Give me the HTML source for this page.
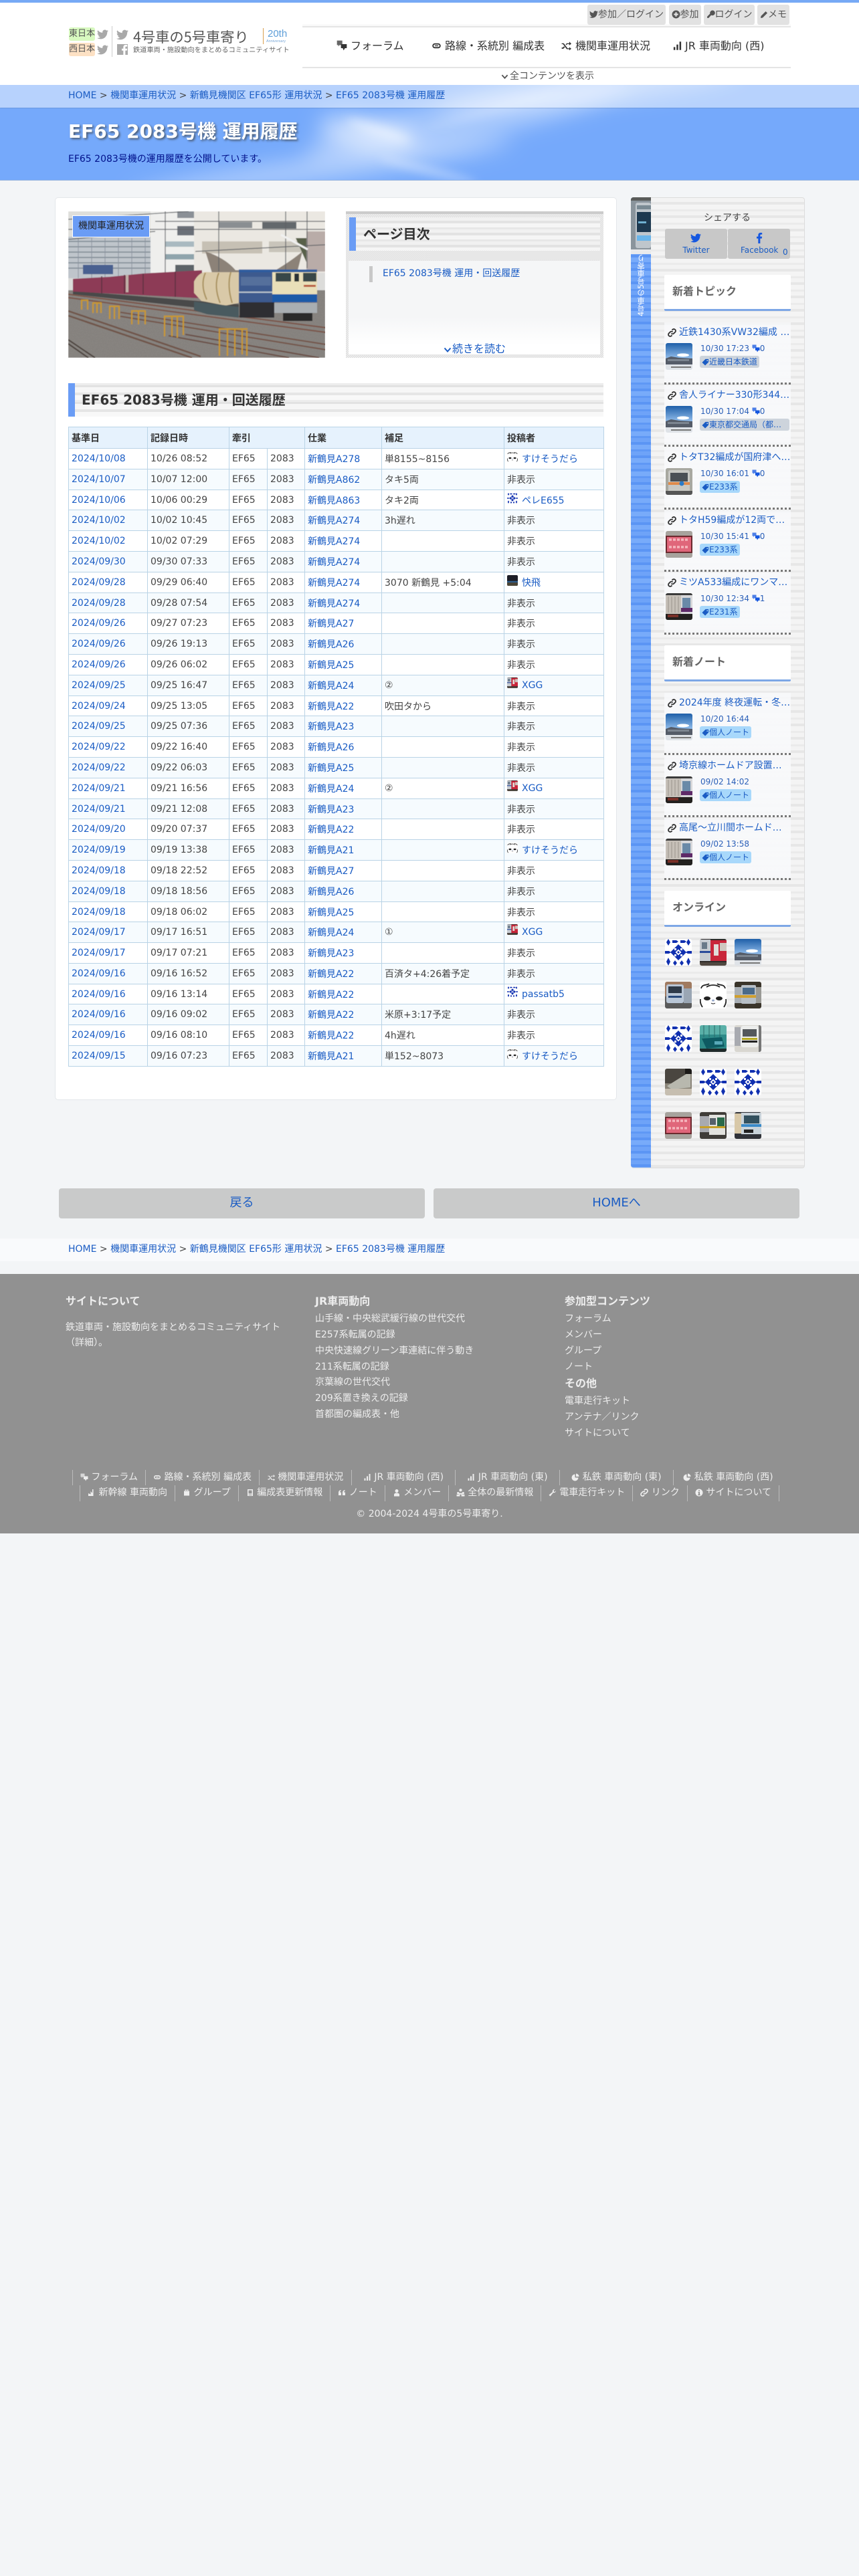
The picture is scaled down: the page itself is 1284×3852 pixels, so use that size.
<!DOCTYPE html>
<html lang="ja">
<head>
<meta charset="utf-8">
<title>EF65 2083号機 運用履歴</title>
<style>
html,body{margin:0;padding:0;background:#f3f5f7}
body{position:relative;width:1284px;height:3852px;overflow:hidden;font-family:"DejaVu Sans","Noto Sans CJK JP",sans-serif;font-size:14px;color:#444}
a{color:#1a5cc4;text-decoration:none}
.t{position:absolute;white-space:nowrap;line-height:20px}
.b{position:absolute}
svg{display:block}
.ic{display:inline-block;vertical-align:-2px;fill:currentColor}
.topb{position:absolute;top:7px;height:30px;background:#e2e2e2;border-radius:3px;color:#555;line-height:30px;text-align:center;white-space:nowrap;font-size:14px}
.nav{position:absolute;top:59px;line-height:20px;font-size:16px;color:#333;white-space:nowrap}
table{position:absolute;left:102px;top:638px;width:800px;table-layout:fixed;border-collapse:collapse;font-size:14px;color:#444}
td,th{border:1px solid #b9d3e6;padding:0 4px;text-align:left;white-space:nowrap;overflow:hidden}
th{background:#e6f2fd;color:#333;height:31px;padding:0 4px}
tr{height:31px}
tr.s{height:30px}
tr:nth-child(odd) td{background:#f6fbfe}
tr:nth-child(even) td{background:#fff}
.av{display:inline-block;width:16px;height:0;margin-right:6px;position:relative}
.av svg{position:absolute;left:0;top:-16px;width:16px;height:16px;border-radius:2px}
.it{position:absolute;left:993px;width:189px;height:91px;background:linear-gradient(rgba(248,249,251,.75),rgba(248,249,251,.95) 15%,rgba(248,249,251,.95) 90%,rgba(248,249,251,.7))}
.it .ti{position:absolute;left:22px;top:5px;width:167px;line-height:20px;font-size:14px;white-space:nowrap;overflow:hidden}
.it .lk{position:absolute;left:5px;top:9px;width:13px;height:13px;fill:none;stroke:#333;stroke-width:3}
.it .th{position:absolute;left:2px;top:31px;width:40px;height:40px;border-radius:3px;overflow:hidden}
.it .th svg,.ava svg{width:40px;height:40px;filter:blur(.35px)}
.it .da{position:absolute;left:54px;top:29px;line-height:20px;font-size:12px;color:#2a5fb8;white-space:nowrap}
.it .tg{position:absolute;left:53px;top:50px;height:18px;line-height:18px;font-size:12px;background:#a8d8fb;color:#1a5cc4;border-radius:3px;padding:0 3px 0 3px;white-space:nowrap;overflow:hidden}
.it .tg.g{background:#cdd4dc}
.se{position:absolute;left:993px;width:189px;height:0;border-top:3px dotted #777}
.hd{position:absolute;left:993px;width:189px;height:51px;background:#fff;border-bottom:3px solid #7da7e6;border-radius:2px;font-size:16px;font-weight:bold;color:#666;line-height:49px;text-indent:12px}
.ava{position:absolute;width:40px;height:40px;border-radius:3px;overflow:hidden}
.ft{position:absolute;white-space:nowrap;color:#eee;line-height:20px;font-size:14px}
.fh{font-weight:bold;font-size:16px}
.fn{position:absolute;height:23px;border-left:1px solid #bbb;color:#eee;text-align:center;line-height:23px;font-size:14px;white-space:nowrap;box-sizing:border-box}
</style>
</head>
<body>
<svg width="0" height="0" style="position:absolute">
<defs>
<symbol id="bird" viewBox="0 0 24 24"><path d="M23.95 4.57a10 10 0 0 1-2.83.78 4.96 4.96 0 0 0 2.17-2.72 9.9 9.9 0 0 1-3.13 1.19 4.92 4.92 0 0 0-8.39 4.48A13.98 13.98 0 0 1 1.64 3.16a4.92 4.92 0 0 0 1.52 6.57 4.9 4.9 0 0 1-2.23-.61v.06a4.92 4.92 0 0 0 3.95 4.83 4.9 4.9 0 0 1-2.21.08 4.93 4.93 0 0 0 4.6 3.42A9.87 9.87 0 0 1 0 19.54a13.94 13.94 0 0 0 7.55 2.21c9.05 0 14-7.5 14-13.98 0-.21 0-.42-.02-.63a10 10 0 0 0 2.46-2.57z"/></symbol>
<symbol id="fb" viewBox="0 0 24 24"><path d="M14 24V13h3.6l.6-4.3H14V6c0-1.2.4-2.1 2.2-2.1h2.1V.2C17.9.1 16.5 0 15 0c-3.3 0-5.5 2-5.5 5.6v3.1H6V13h3.5v11z"/></symbol>
<symbol id="com" viewBox="0 0 24 24"><path d="M1 1h12v10H7l-3 3v-3H1z" opacity=".75"/><path d="M10 9h13v9h-4l-3 5-2-5h-4z"/></symbol>
<symbol id="rt" viewBox="0 0 24 24"><path d="M8 6h8a6 6 0 0 1 0 12H8A6 6 0 0 1 8 6zm0 3a3 3 0 0 0 0 6h8a3 3 0 0 0 0-6z"/><path d="M8 11h8v2H8z"/></symbol>
<symbol id="shuf" viewBox="0 0 24 24"><path d="M1 6h5l9 12h4v-3l5 4-5 4v-3h-6L4 8H1zM1 16h3l2.500-3 2 2.500L5 19H1zM13 6h6V2l5 5-5 4V8h-5l-2 2.500-1.500-2z"/></symbol>
<symbol id="bars" viewBox="0 0 24 24"><path d="M3 15h4v7H3zM10 9h4v13h-4zM17 2h4v20h-4z"/></symbol>
<symbol id="pie" viewBox="0 0 24 24"><path d="M11 3v10h10a10 10 0 1 1-10-10zM14 1a9 9 0 0 1 9 9h-9z"/></symbol>
<symbol id="ar" viewBox="0 0 24 24"><path d="M2 22V14l7 3V8l5 5V2h3v20z"/></symbol>
<symbol id="gift" viewBox="0 0 24 24"><path d="M4 7h16v14H4zM7 3h4v3H7zM13 3h4v3h-4z"/></symbol>
<symbol id="book" viewBox="0 0 24 24"><path d="M4 2h16v20H4zm3 3v10h10V5zm0 13v2h10v-2z"/></symbol>
<symbol id="quo" viewBox="0 0 24 24"><path d="M2 20v-8c0-4 2-7 7-8v3c-2 1-3 2-3 4h4v9zM14 20v-8c0-4 2-7 7-8v3c-2 1-3 2-3 4h4v9z"/></symbol>
<symbol id="usr" viewBox="0 0 24 24"><circle cx="12" cy="7" r="5"/><path d="M4 23v-5c0-3 3-5 8-5s8 2 8 5v5z"/></symbol>
<symbol id="usrs" viewBox="0 0 24 24"><circle cx="12" cy="6" r="4"/><path d="M7 14h10v4H7z"/><circle cx="5" cy="14" r="3"/><circle cx="19" cy="14" r="3"/><path d="M1 18h9v5H1zM14 18h9v5h-9z"/></symbol>
<symbol id="wr" viewBox="0 0 24 24"><path d="M22 6a6 6 0 0 1-8 6L5 23l-4-4L12 10a6 6 0 0 1 7-8l-4 4 1 3 3 1z"/></symbol>
<symbol id="lnk" viewBox="0 0 24 24"><path fill="none" stroke="currentColor" stroke-width="3.500" d="M10 14a5 5 0 0 0 7 0l4-4a5 5 0 0 0-7-7l-2 2M14 10a5 5 0 0 0-7 0l-4 4a5 5 0 0 0 7 7l2-2"/></symbol>
<symbol id="info" viewBox="0 0 24 24"><path fill-rule="evenodd" d="M12 1a11 11 0 1 0 0 22 11 11 0 0 0 0-22zM10 5h4v3h-4zM9 10h5v8h2v2H8v-2h2v-6H9z"/></symbol>
<symbol id="key" viewBox="0 0 24 24"><path d="M16 1a7 7 0 1 1-3 13L6 22H2v-4l8-8a7 7 0 0 1 6-9z"/></symbol>
<symbol id="pen" viewBox="0 0 24 24"><path d="M17 2l5 5L8 21l-6 1 1-6z"/></symbol>
<symbol id="plus" viewBox="0 0 24 24"><path fill-rule="evenodd" d="M12 1a11 11 0 1 0 0 22 11 11 0 0 0 0-22zM10 6h4v4h4v4h-4v4h-4v-4H6v-4h4z"/></symbol>
<symbol id="chev" viewBox="0 0 24 24"><path fill="none" stroke="currentColor" stroke-width="4" d="M3 7l9 10 9-10"/></symbol>
<symbol id="tag" viewBox="0 0 24 24"><path fill-rule="evenodd" d="M1 13L12 2h10v10L11 23zM18 5a2 2 0 1 0 0 4 2 2 0 0 0 0-4z"/></symbol>

<symbol id="sky" viewBox="0 0 40 40"><defs><linearGradient id="g1" x1="0" y1="0" x2="0" y2="1"><stop offset="0" stop-color="#1f5fa8"/><stop offset=".55" stop-color="#8db9e8"/></linearGradient></defs><rect width="40" height="40" fill="url(#g1)"/><ellipse cx="26" cy="18" rx="9" ry="2.500" fill="#fff"/><path d="M0 23l8-3 12 2 20 1v9H0z" fill="#555c68"/><path d="M3 24h32v3H3z" fill="#7c8590"/><rect y="32" width="40" height="8" fill="#dfe3e8"/><rect x="8" y="35" width="30" height="2" fill="#777"/></symbol>
<symbol id="org" viewBox="0 0 40 40"><rect width="40" height="40" fill="#a8a8a0"/><rect x="4" y="3" width="32" height="34" rx="3" fill="#c8c8c4"/><rect x="7" y="7" width="26" height="13" fill="#4a4f55"/><rect x="4" y="21" width="32" height="4" fill="#e08a4a"/><circle cx="24" cy="23" r="3.500" fill="#2a7ac8"/><rect y="34" width="40" height="6" fill="#555"/></symbol>
<symbol id="led" viewBox="0 0 40 40"><rect width="40" height="40" fill="#a7a39d"/><rect y="7" width="40" height="26" fill="#6a2a2e"/><rect x="2" y="9" width="36" height="22" fill="#e0667a"/><path d="M5 13h30M5 24h30" stroke="#f5b5bd" stroke-width="3.500" stroke-dasharray="4 2"/></symbol>
<symbol id="met" viewBox="0 0 40 40"><rect width="40" height="40" fill="#3a3a3a"/><rect x="0" y="3" width="24" height="28" fill="#c6c0b8"/><path d="M4 5v24M9 5v24M14 5v24M19 5v24" stroke="#9b948c"/><rect x="23" y="3" width="17" height="28" fill="#d7d7d9"/><rect x="25" y="7" width="12" height="15" fill="#6a8aa8"/><rect x="23" y="22" width="17" height="6" fill="#5e2a68"/><rect y="31" width="40" height="9" fill="#23211f"/><rect x="3" y="32" width="16" height="4" fill="#7a3028"/></symbol>
<symbol id="idn" viewBox="0 0 40 40"><rect width="40" height="40" fill="#fff"/><g fill="#1030b0"><path d="M20 8l12 12-12 12L8 20z"/><path d="M5 0l3 5-3 5-3-5zM35 0l3 5-3 5-3-5zM5 28l3 6-3 6-3-6zM35 28l3 6-3 6-3-6zM11 2h6l3 2-3 2h-6zM23 2h6l3 2-3 2h-6zM0 18h6l3 2-3 2H0zM34 18h6v4h-6l-3-2zM15 32l3 4-3 4-3-4zM25 32l3 4-3 4-3-4z"/></g><path d="M14 14h3v3h-3zM23 14h3v3h-3zM14 23h3v3h-3zM23 23h3v3h-3z" fill="#fff"/><path d="M20 15.500l4.500 4.500-4.500 4.500-4.500-4.500z" fill="#fff"/><path d="M20 18l2 2-2 2-2-2z" fill="#1030b0"/></symbol>
<symbol id="red" viewBox="0 0 40 40"><rect width="40" height="40" fill="#2d2a28"/><rect x="0" y="1" width="16" height="32" fill="#c8ccd2"/><rect x="3" y="5" width="8" height="10" fill="#6a7a8a"/><rect x="16" y="2" width="24" height="31" fill="#c9263a"/><rect x="21" y="8" width="7" height="17" fill="#e0dcd8"/><rect x="30" y="6" width="10" height="12" fill="#cfc8c0"/><rect y="18" width="16" height="3" fill="#2a4a9a"/><rect y="35" width="40" height="5" fill="#504840"/></symbol>
<symbol id="tob" viewBox="0 0 40 40"><rect width="40" height="40" fill="#a07a60"/><rect y="22" width="40" height="18" fill="#5a5a5a"/><rect x="2" y="4" width="26" height="28" rx="3" fill="#b9c6d6"/><rect x="5" y="7" width="20" height="10" fill="#2f3a48"/><rect x="28" y="10" width="12" height="22" fill="#9aa6b4"/><rect x="5" y="21" width="20" height="3" fill="#2a4a7a"/></symbol>
<symbol id="pan" viewBox="0 0 40 40"><rect width="40" height="40" fill="#fff"/><path d="M2 10C4 3 10 6 14 3M38 10c-2-7-8-4-12-7M1 26c-1 5 1 9 3 12M39 26c1 5-1 9-3 12M10 8c6-4 14-4 20 0" fill="none" stroke="#222" stroke-width="1.800"/><ellipse cx="11" cy="25" rx="5" ry="3" fill="#222"/><ellipse cx="29" cy="25" rx="5" ry="3" fill="#222"/><ellipse cx="20" cy="28" rx="2" ry="1.500" fill="#9ac"/><path d="M17 32q3 2 6 0" fill="none" stroke="#222"/></symbol>
<symbol id="yel" viewBox="0 0 40 40"><rect width="40" height="40" fill="#3a342a"/><rect x="0" y="8" width="12" height="24" fill="#aab0b6"/><rect x="10" y="5" width="22" height="28" rx="2" fill="#b8bfc6"/><rect x="12" y="9" width="18" height="10" fill="#4a6a8a"/><rect x="0" y="20" width="40" height="4" fill="#d0a030"/><rect x="32" y="8" width="8" height="24" fill="#9a9a96"/></symbol>
<symbol id="tea" viewBox="0 0 40 40"><rect width="40" height="40" fill="#2e8a88"/><path d="M0 0h40v14H0z" fill="#5ab0a8"/><path d="M6 0v18M14 0v18M22 0v18M30 0v18" stroke="#2a6a68"/><path d="M3 20l30-2 4 14-27 3z" fill="#0e5a62"/><rect x="22" y="24" width="12" height="5" fill="#58a8b8"/><rect y="35" width="40" height="5" fill="#1f2a2a"/></symbol>
<symbol id="y09" viewBox="0 0 40 40"><rect width="40" height="40" fill="#d8d6d0"/><rect x="0" y="3" width="10" height="28" fill="#a8aab0"/><rect x="9" y="1" width="27" height="32" rx="4" fill="#ecedec"/><rect x="12" y="6" width="21" height="11" fill="#54585c"/><rect x="11" y="19" width="23" height="3" fill="#b5a820"/><rect x="11" y="23" width="23" height="3" fill="#222"/><rect x="36" y="0" width="4" height="40" fill="#777"/></symbol>
<symbol id="plt" viewBox="0 0 40 40"><rect width="40" height="40" fill="#8a8478"/><path d="M0 0h40v6L12 22H0z" fill="#4a4640"/><path d="M3 26L38 4v24L10 31z" fill="#b8b8ae"/><path d="M0 30h40v10H0z" fill="#c6beb0"/><path d="M30 0h10v8h-10z" fill="#1c1a18"/></symbol>
<symbol id="sei" viewBox="0 0 40 40"><rect width="40" height="40" fill="#3f3c38"/><rect x="0" y="6" width="16" height="24" fill="#a8aab0"/><rect x="14" y="4" width="24" height="30" fill="#e2e2de"/><rect x="26" y="8" width="11" height="14" fill="#2a6a4a"/><rect x="15" y="9" width="9" height="10" fill="#56606a"/><rect x="0" y="21" width="38" height="3" fill="#c8a028"/></symbol>
<symbol id="oda" viewBox="0 0 40 40"><rect width="40" height="40" fill="#303238"/><rect x="0" y="2" width="12" height="30" fill="#d8c8a8"/><rect x="10" y="1" width="30" height="32" fill="#c9d3da"/><rect x="14" y="5" width="23" height="12" fill="#33505e"/><rect x="10" y="18" width="30" height="4" fill="#3a8ac8"/><rect x="14" y="26" width="14" height="5" fill="#222"/></symbol>
<symbol id="dark" viewBox="0 0 40 40"><rect width="40" height="40" fill="#1d1d26"/><rect y="22" width="40" height="6" fill="#2e5c8a"/><rect y="28" width="40" height="12" fill="#4b4536"/></symbol>
</defs>
</svg>

<!-- header -->
<div class="b" style="left:0;top:0;width:1284px;height:127px;background:#fff"></div>
<div class="b" style="left:0;top:0;width:1284px;height:4px;background:#77a9f5"></div>

<div class="b" style="left:103px;top:41px;width:39px;height:20px;background:#d8f9c0;border-radius:3px;color:#555;font-size:13px;line-height:20px;text-align:center">東日本</div>
<div class="b" style="left:103px;top:64px;width:39px;height:20px;background:#fde1c4;border-radius:3px;color:#555;font-size:13px;line-height:20px;text-align:center">西日本</div>
<svg class="b" style="left:145px;top:43px;fill:#a9a9a9" width="17" height="17"><use href="#bird"/></svg>
<svg class="b" style="left:145px;top:66px;fill:#a9a9a9" width="17" height="17"><use href="#bird"/></svg>
<div class="b" style="left:167px;top:39px;width:1px;height:46px;background:#ccc"></div>
<svg class="b" style="left:174px;top:43px;fill:#a9a9a9" width="18" height="18"><use href="#bird"/></svg>
<div class="b" style="left:175px;top:66px;width:16px;height:16px;background:#a9a9a9;overflow:hidden"><svg style="position:absolute;left:3px;top:1px;fill:#fff" width="16" height="16"><use href="#fb"/></svg></div>
<div class="t" style="left:199px;top:43px;line-height:24px;font-size:21.3px;color:#555;font-family:'Noto Sans CJK JP',sans-serif">4号車の5号車寄り</div>
<div class="t" style="left:199px;top:64px;font-size:10.2px;color:#666;font-family:'Noto Sans CJK JP',sans-serif">鉄道車両・施設動向をまとめるコミュニティサイト</div>
<div class="b" style="left:393px;top:42px;width:1px;height:24px;background:#d9a050"></div>
<div class="t" style="left:400px;top:41px;line-height:20px;font-size:15px;color:#5d9ed8;font-family:'Liberation Sans',sans-serif">20th</div>
<div class="t" style="left:398px;top:58px;line-height:8px;font-size:5.500px;color:#7aa8d8;font-family:'Liberation Sans',sans-serif">Anniversary</div>

<div class="topb" style="left:878px;width:117px"><svg class="ic" width="13" height="13"><use href="#bird"/></svg>参加／ログイン</div>
<div class="topb" style="left:1000px;width:48px"><svg class="ic" width="13" height="13"><use href="#plus"/></svg>参加</div>
<div class="topb" style="left:1052px;width:76px"><svg class="ic" width="13" height="13"><use href="#key"/></svg>ログイン</div>
<div class="topb" style="left:1132px;width:48px"><svg class="ic" width="12" height="12"><use href="#pen"/></svg>メモ</div>
<div class="b" style="left:452px;top:37px;width:730px;height:1px;background:#f2f2f2"></div>
<div class="b" style="left:452px;top:39px;width:730px;height:2px;background:#e4e4e4"></div>
<div class="b" style="left:452px;top:100px;width:730px;height:2px;background:#e4e4e4"></div>
<div class="nav" style="left:503px"><svg class="ic" width="16" height="16" style="margin-right:5px"><use href="#com"/></svg>フォーラム</div>
<div class="nav" style="left:645px"><svg class="ic" width="15" height="15" style="margin-right:5px"><use href="#rt"/></svg>路線・系統別 編成表</div>
<div class="nav" style="left:839px"><svg class="ic" width="15" height="15" style="margin-right:6px"><use href="#shuf"/></svg>機関車運用状況</div>
<div class="nav" style="left:1005px"><svg class="ic" width="15" height="15" style="margin-right:4px"><use href="#bars"/></svg>JR 車両動向 (西)</div>
<div class="t" style="left:749px;top:104px;color:#555;font-size:14px"><svg class="ic" width="11" height="11" style="margin-right:2px"><use href="#chev"/></svg>全コンテンツを表示</div>

<!-- hero -->
<svg class="b" style="left:0;top:127px" width="1284" height="143" viewBox="0 0 1284 143">
<defs>
<filter id="bl" x="-30%" y="-100%" width="160%" height="300%"><feGaussianBlur stdDeviation="16"/></filter>
<filter id="bl2" x="-30%" y="-100%" width="160%" height="300%"><feGaussianBlur stdDeviation="7"/></filter>
</defs>
<rect width="1284" height="143" fill="#75a9fb"/>
<g filter="url(#bl)" fill="#fff">
<ellipse cx="700" cy="50" rx="250" ry="32" opacity=".34" transform="rotate(-12 700 50)"/>
<ellipse cx="550" cy="72" rx="75" ry="24" opacity=".55" transform="rotate(10 550 72)"/>
<ellipse cx="480" cy="125" rx="290" ry="18" opacity=".4" transform="rotate(-8 480 125)"/>
<ellipse cx="880" cy="8" rx="230" ry="18" opacity=".42" transform="rotate(-7 880 8)"/>
</g>
<g filter="url(#bl2)" fill="#fff">
<ellipse cx="565" cy="68" rx="50" ry="8" opacity=".42" transform="rotate(18 565 68)"/>
<ellipse cx="640" cy="128" rx="75" ry="6" opacity=".38" transform="rotate(14 640 128)"/>
<ellipse cx="740" cy="36" rx="110" ry="5" opacity=".18" transform="rotate(-16 740 36)"/>
</g>
</svg>
<div class="b" style="left:0;top:127px;width:1284px;height:34px;background:rgba(255,255,255,.48);box-shadow:0 1px 1px rgba(90,120,170,.35)"></div>
<div class="b" style="left:0;top:269px;width:1284px;height:1px;background:#93b2dd"></div>
<div class="t" style="left:102px;top:133px;color:#444;font-size:14px"><a href="#">HOME</a> &gt; <a href="#">機関車運用状況</a> &gt; <a href="#">新鶴見機関区 EF65形 運用状況</a> &gt; <a href="#">EF65 2083号機 運用履歴</a></div>
<div class="t" style="left:102px;top:177px;line-height:40px;font-size:28px;font-weight:bold;color:#fff;text-shadow:2px 2px 3px #4a5a70">EF65 2083号機 運用履歴</div>
<div class="t" style="left:102px;top:228px;color:#00108a;font-size:14px">EF65 2083号機の運用履歴を公開しています。</div>

<!-- main card -->
<div class="b" style="left:82px;top:295px;width:838px;height:1348px;background:#fff;border:1px solid #e4e7ea;border-radius:5px"></div>

<!-- photo -->
<svg class="b" style="left:102px;top:316px" width="384" height="219" viewBox="0 0 384 219">
<defs>
<filter id="sb"><feGaussianBlur stdDeviation=".45"/></filter>
<filter id="nz" x="0" y="0" width="100%" height="100%"><feTurbulence type="fractalNoise" baseFrequency=".8" numOctaves="2" seed="3"/><feColorMatrix values="0 0 0 0 .2  0 0 0 0 .19  0 0 0 0 .18  0 0 0 1.400 -.45"/></filter>
</defs>
<g filter="url(#sb)">
<rect width="384" height="219" fill="#dcdcda"/>
<rect x="0" y="0" width="123" height="100" fill="#bfc5cb"/>
<path d="M0 45h123M0 53h123M0 61h123M0 69h123M0 77h123M0 85h123" stroke="#7b8692" stroke-width="1.500"/>
<path d="M15 40v60M35 40v60M55 40v60M75 40v60M95 40v60M115 40v60" stroke="#8a949e"/>
<rect x="0" y="0" width="123" height="38" fill="#dfdfdb"/>
<rect x="22" y="80" width="45" height="14" fill="#4a6090"/>
<rect x="123" y="0" width="65" height="92" fill="#efefed"/>
<rect x="163" y="22" width="25" height="14" fill="#6a7078"/>
<rect x="163" y="0" width="25" height="10" fill="#8b9096"/>
<rect x="145" y="64" width="43" height="8" fill="#8fa4ac"/>
<rect x="145" y="45" width="43" height="8" fill="#a9b9c0"/>
<rect x="160" y="80" width="28" height="12" fill="#5c6468"/>
<rect x="188" y="0" width="196" height="92" fill="#ebe8e2"/>
<rect x="290" y="16" width="51" height="10" fill="#64686c"/>
<rect x="225" y="16" width="50" height="9" fill="#8a8e92"/>
<rect x="200" y="45" width="90" height="18" fill="#c6c0b4"/>
<rect x="300" y="45" width="50" height="16" fill="#c8c4ba"/>
<path d="M205 60q30 10 45 28h60q25-15 40-28l-8 32H215z" fill="#8c8278"/>
<path d="M340 40l20 45 14-25-14-20z" fill="#59614a"/>
<rect x="356" y="30" width="28" height="60" fill="#b9aca8"/>
<path d="M0 12L180 0M130 15h254M0 27h384M0 42L130 30M190 60L384 50M145 0v100M225 0v90M325 0v100M357 0v85" stroke="#5e6266" stroke-width="1.200" fill="none"/>
<path d="M318 35l40 22" stroke="#f0f0f0" stroke-width="3"/>
<rect x="0" y="118" width="384" height="101" fill="#8a8682"/>
<rect x="0" y="118" width="384" height="101" filter="url(#nz)"/>
<path d="M0 124l385 50M0 129l385 52" stroke="#7a5548" stroke-width="2"/>
<path d="M0 149l198 68M0 156l185 63" stroke="#6f5448" stroke-width="2.500"/>
<path d="M78 151l307 48M78 157l307 50" stroke="#73554a" stroke-width="2"/>
<path d="M175 184l200 35M150 186l180 33" stroke="#6a5046" stroke-width="2"/>
<path d="M0 192l40 27M0 198l30 21" stroke="#4e453f" stroke-width="2"/>
<path d="M7 119l248 20v12L7 124z" fill="#49484a"/>
<path d="M7 101l55-3 50-5 88-5v42L7 120z" fill="#8d3a57"/>
<path d="M50 97v26M84 95v28M112 93v31M160 90v38" stroke="#5c3040" stroke-width="1.500"/>
<rect x="86" y="95" width="4" height="26" fill="#c0b0a8"/>
<path d="M188 105q8-16 22-14h45v46l-20 4-36-7-11-12z" fill="#d9c9a8"/>
<path d="M205 92q-8 18 2 40M225 92q-8 20 2 45M243 91q-6 20 2 46" stroke="#a9925f" stroke-width="2" fill="none"/>
<path d="M188 135l67 8v16l-47-5-20-6z" fill="#4a5a5e"/>
<path d="M255 87h117v8h-117z" fill="#2f5d9f"/>
<rect x="255" y="91" width="51" height="46" fill="#3c5a8e"/>
<rect x="258" y="98" width="45" height="13" fill="#55709c"/>
<rect x="255" y="120" width="51" height="2" fill="#b9c4cc"/>
<rect x="305" y="91" width="67" height="34" fill="#e9dfb9"/>
<rect x="310" y="92" width="23" height="13" fill="#39464a"/>
<rect x="338" y="93" width="7" height="12" fill="#2a3236"/>
<rect x="351" y="92" width="20" height="13" fill="#39464a"/>
<rect x="352" y="110" width="18" height="3" fill="#b85a3c"/>
<rect x="305" y="124" width="67" height="12" fill="#1f5aa8"/>
<rect x="256" y="136" width="52" height="23" fill="#2e2e30"/>
<rect x="308" y="137" width="64" height="15" fill="#a9aeb2"/>
<rect x="321" y="152" width="44" height="12" fill="#2a2a2c"/>
<g fill="none" stroke="#c9972f" stroke-width="2.200">
<path d="M19 133h11M20 133v14M29 133v14M36 137h14M37 137v15M43 137v15M49 137v15M61 142h16M62 142v19M69 142v19M76 142v19M94 149h22M95 149v20M105 149v20M115 149v20M143 157h30M144 157v30M155 157v30M163 157v32M172 157v28M225 176h43M226 176v40M238 176v40M249 176v40M260 176v38M267 178v38"/>
</g>
</g>
</svg>
<div class="b" style="left:108px;top:322px;width:114px;height:31px;background:#6a9cf5;border:1px solid #fff;color:#222;font-size:14px;line-height:31px;text-align:center">機関車運用状況</div>

<!-- TOC -->
<div class="b" style="left:517px;top:316px;width:385px;height:219px;background:repeating-conic-gradient(#d9d9d9 0 25%,#f5f5f5 0 50%) 0 0/3px 3px"></div>
<div class="b" style="left:517px;top:316px;width:385px;height:4px;background:#cbcbcb"></div>
<div class="b" style="left:522px;top:325px;width:375px;height:50px;background:repeating-linear-gradient(#f1f1f1 0 5px,#e3e3e3 5px 9px,#f5f5f5 9px 15px,#e7e7e7 15px 18px)"></div>
<div class="b" style="left:522px;top:325px;width:10px;height:50px;background:#6a9cf5"></div>
<div class="t" style="left:543px;top:335px;line-height:30px;font-size:20px;font-weight:bold;color:#333">ページ目次</div>
<div class="b" style="left:521px;top:390px;width:376px;height:140px;background:linear-gradient(#f5f6f7 60%,#fff 90%)"></div>
<div class="b" style="left:552px;top:398px;width:5px;height:24px;background:#c8c8c8"></div>
<div class="t" style="left:572px;top:399px"><a href="#">EF65 2083号機 運用・回送履歴</a></div>
<div class="t" style="left:663px;top:512px;font-size:16px"><a href="#"><svg class="ic" width="12" height="12" style="margin-right:1px"><use href="#chev"/></svg>続きを読む</a></div>

<!-- section heading -->
<div class="b" style="left:102px;top:573px;width:800px;height:50px;background:repeating-linear-gradient(#ededed 0 3px,#e2e2e2 3px 6px,#f6f6f6 6px 14px,#e6e6e6 14px 18px,#f8f8f8 18px 25px)"></div>
<div class="b" style="left:102px;top:573px;width:10px;height:50px;background:#6a9cf5"></div>
<div class="t" style="left:122px;top:583px;line-height:30px;font-size:20px;font-weight:bold;color:#333">EF65 2083号機 運用・回送履歴</div>

<!-- table -->
<table>
<colgroup><col style="width:118px"><col style="width:122px"><col style="width:57px"><col style="width:56px"><col style="width:115px"><col style="width:183px"><col style="width:149px"></colgroup>
<tr><th>基準日</th><th>記録日時</th><th colspan="2">牽引</th><th>仕業</th><th>補足</th><th>投稿者</th></tr>
<tr><td><a href="#">2024/10/08</a></td><td>10/26 08:52</td><td>EF65</td><td>2083</td><td><a href="#">新鶴見A278</a></td><td>単8155~8156</td><td><span class="av"><svg><use href="#pan"/></svg></span><a href="#">すけそうだら</a></td></tr>
<tr><td><a href="#">2024/10/07</a></td><td>10/07 12:00</td><td>EF65</td><td>2083</td><td><a href="#">新鶴見A862</a></td><td>タキ5両</td><td>非表示</td></tr>
<tr class="s"><td><a href="#">2024/10/06</a></td><td>10/06 00:29</td><td>EF65</td><td>2083</td><td><a href="#">新鶴見A863</a></td><td>タキ2両</td><td><span class="av"><svg><use href="#idn"/></svg></span><a href="#">ペレE655</a></td></tr>
<tr><td><a href="#">2024/10/02</a></td><td>10/02 10:45</td><td>EF65</td><td>2083</td><td><a href="#">新鶴見A274</a></td><td>3h遅れ</td><td>非表示</td></tr>
<tr><td><a href="#">2024/10/02</a></td><td>10/02 07:29</td><td>EF65</td><td>2083</td><td><a href="#">新鶴見A274</a></td><td></td><td>非表示</td></tr>
<tr><td><a href="#">2024/09/30</a></td><td>09/30 07:33</td><td>EF65</td><td>2083</td><td><a href="#">新鶴見A274</a></td><td></td><td>非表示</td></tr>
<tr><td><a href="#">2024/09/28</a></td><td>09/29 06:40</td><td>EF65</td><td>2083</td><td><a href="#">新鶴見A274</a></td><td>3070 新鶴見 +5:04</td><td><span class="av"><svg><use href="#dark"/></svg></span><a href="#">快飛</a></td></tr>
<tr class="s"><td><a href="#">2024/09/28</a></td><td>09/28 07:54</td><td>EF65</td><td>2083</td><td><a href="#">新鶴見A274</a></td><td></td><td>非表示</td></tr>
<tr><td><a href="#">2024/09/26</a></td><td>09/27 07:23</td><td>EF65</td><td>2083</td><td><a href="#">新鶴見A27</a></td><td></td><td>非表示</td></tr>
<tr><td><a href="#">2024/09/26</a></td><td>09/26 19:13</td><td>EF65</td><td>2083</td><td><a href="#">新鶴見A26</a></td><td></td><td>非表示</td></tr>
<tr><td><a href="#">2024/09/26</a></td><td>09/26 06:02</td><td>EF65</td><td>2083</td><td><a href="#">新鶴見A25</a></td><td></td><td>非表示</td></tr>
<tr><td><a href="#">2024/09/25</a></td><td>09/25 16:47</td><td>EF65</td><td>2083</td><td><a href="#">新鶴見A24</a></td><td>②</td><td><span class="av"><svg><use href="#red"/></svg></span><a href="#">XGG</a></td></tr>
<tr class="s"><td><a href="#">2024/09/24</a></td><td>09/25 13:05</td><td>EF65</td><td>2083</td><td><a href="#">新鶴見A22</a></td><td>吹田タから</td><td>非表示</td></tr>
<tr><td><a href="#">2024/09/25</a></td><td>09/25 07:36</td><td>EF65</td><td>2083</td><td><a href="#">新鶴見A23</a></td><td></td><td>非表示</td></tr>
<tr><td><a href="#">2024/09/22</a></td><td>09/22 16:40</td><td>EF65</td><td>2083</td><td><a href="#">新鶴見A26</a></td><td></td><td>非表示</td></tr>
<tr><td><a href="#">2024/09/22</a></td><td>09/22 06:03</td><td>EF65</td><td>2083</td><td><a href="#">新鶴見A25</a></td><td></td><td>非表示</td></tr>
<tr><td><a href="#">2024/09/21</a></td><td>09/21 16:56</td><td>EF65</td><td>2083</td><td><a href="#">新鶴見A24</a></td><td>②</td><td><span class="av"><svg><use href="#red"/></svg></span><a href="#">XGG</a></td></tr>
<tr class="s"><td><a href="#">2024/09/21</a></td><td>09/21 12:08</td><td>EF65</td><td>2083</td><td><a href="#">新鶴見A23</a></td><td></td><td>非表示</td></tr>
<tr><td><a href="#">2024/09/20</a></td><td>09/20 07:37</td><td>EF65</td><td>2083</td><td><a href="#">新鶴見A22</a></td><td></td><td>非表示</td></tr>
<tr><td><a href="#">2024/09/19</a></td><td>09/19 13:38</td><td>EF65</td><td>2083</td><td><a href="#">新鶴見A21</a></td><td></td><td><span class="av"><svg><use href="#pan"/></svg></span><a href="#">すけそうだら</a></td></tr>
<tr><td><a href="#">2024/09/18</a></td><td>09/18 22:52</td><td>EF65</td><td>2083</td><td><a href="#">新鶴見A27</a></td><td></td><td>非表示</td></tr>
<tr><td><a href="#">2024/09/18</a></td><td>09/18 18:56</td><td>EF65</td><td>2083</td><td><a href="#">新鶴見A26</a></td><td></td><td>非表示</td></tr>
<tr class="s"><td><a href="#">2024/09/18</a></td><td>09/18 06:02</td><td>EF65</td><td>2083</td><td><a href="#">新鶴見A25</a></td><td></td><td>非表示</td></tr>
<tr><td><a href="#">2024/09/17</a></td><td>09/17 16:51</td><td>EF65</td><td>2083</td><td><a href="#">新鶴見A24</a></td><td>①</td><td><span class="av"><svg><use href="#red"/></svg></span><a href="#">XGG</a></td></tr>
<tr><td><a href="#">2024/09/17</a></td><td>09/17 07:21</td><td>EF65</td><td>2083</td><td><a href="#">新鶴見A23</a></td><td></td><td>非表示</td></tr>
<tr><td><a href="#">2024/09/16</a></td><td>09/16 16:52</td><td>EF65</td><td>2083</td><td><a href="#">新鶴見A22</a></td><td>百済タ+4:26着予定</td><td>非表示</td></tr>
<tr class="s"><td><a href="#">2024/09/16</a></td><td>09/16 13:14</td><td>EF65</td><td>2083</td><td><a href="#">新鶴見A22</a></td><td></td><td><span class="av"><svg><use href="#idn"/></svg></span><a href="#">passatb5</a></td></tr>
<tr><td><a href="#">2024/09/16</a></td><td>09/16 09:02</td><td>EF65</td><td>2083</td><td><a href="#">新鶴見A22</a></td><td>米原+3:17予定</td><td>非表示</td></tr>
<tr><td><a href="#">2024/09/16</a></td><td>09/16 08:10</td><td>EF65</td><td>2083</td><td><a href="#">新鶴見A22</a></td><td>4h遅れ</td><td>非表示</td></tr>
<tr><td><a href="#">2024/09/15</a></td><td>09/16 07:23</td><td>EF65</td><td>2083</td><td><a href="#">新鶴見A21</a></td><td>単152~8073</td><td><span class="av"><svg><use href="#pan"/></svg></span><a href="#">すけそうだら</a></td></tr>
</table>

<!-- sidebar -->
<div class="b" style="left:943px;top:295px;width:258px;height:1450px;border:1px solid #dcdcdc;border-radius:4px;box-sizing:content-box;background:repeating-linear-gradient(#f3f3f3 0 6px,#e7e7e7 6px 10px,#f4f4f4 10px 17px,#ebebeb 17px 20px)"></div>
<div class="b" style="left:943px;top:295px;width:30px;height:1451px;border-radius:4px 0 0 4px;background:repeating-linear-gradient(#6ea3f8 0 6px,#5b95f4 6px 10px,#78abfa 10px 17px,#5f98f5 17px 20px)"></div>
<svg class="b" style="left:943px;top:295px;border-radius:4px 0 0 0" width="30" height="85" viewBox="0 0 30 85">
<rect width="30" height="85" fill="#8a949c"/><rect x="0" y="0" width="30" height="5" fill="#5a5c5a"/><rect x="7" y="8" width="23" height="68" rx="3" fill="#bfc6cc"/><rect x="9" y="12" width="21" height="6" fill="#7a8a94"/><rect x="9" y="22" width="21" height="30" fill="#1d3950"/><rect x="11" y="36" width="12" height="3" fill="#6fb0d0"/><rect x="9" y="57" width="21" height="8" fill="#6ab5ea"/><rect x="0" y="78" width="30" height="7" fill="#e8eaec"/>
</svg>
<div class="b" style="left:952px;top:380px;height:93px;font-size:11.2px;line-height:14px;color:#fff;writing-mode:vertical-rl;transform:rotate(180deg);white-space:nowrap;text-align:left">4号車の5号車寄り</div>

<div class="t" style="left:1037px;top:316px;width:100px;text-align:center;color:#444;font-size:14px">シェアする</div>
<div class="b" style="left:994px;top:342px;width:93px;height:45px;background:#c8c8c8;border-radius:3px"></div>
<div class="b" style="left:1088px;top:342px;width:93px;height:45px;background:#c8c8c8;border-radius:3px"></div>
<svg class="b" style="left:1032px;top:348px;fill:#1557e0" width="16" height="16"><use href="#bird"/></svg>
<svg class="b" style="left:1127px;top:348px;fill:#1557e0" width="16" height="16"><use href="#fb"/></svg>
<div class="t" style="left:994px;top:364px;width:93px;text-align:center;font-size:12px"><a href="#">Twitter</a></div>
<div class="t" style="left:1107px;top:364px;font-size:12px"><a href="#">Facebook</a></div>
<div class="t" style="left:1170px;top:367px;font-size:12px;color:#1a5cc4">0</div>

<div class="hd" style="top:411px">新着トピック</div>

<div class="it" style="top:482px"><svg class="lk" viewBox="0 0 24 24"><use href="#lnk" color="#333"/></svg><div class="ti"><a href="#">近鉄1430系VW32編成 …</a></div><div class="th"><svg><use href="#sky"/></svg></div><div class="da">10/30 17:23 <svg class="ic" width="12" height="12" style="fill:#1557e0"><use href="#com"/></svg>0</div><div class="tg g"><svg class="ic" width="11" height="11"><use href="#tag"/></svg>近畿日本鉄道</div></div>
<div class="se" style="top:572px"></div>
<div class="it" style="top:576px"><svg class="lk" viewBox="0 0 24 24"><use href="#lnk" color="#333"/></svg><div class="ti"><a href="#">舎人ライナー330形344…</a></div><div class="th"><svg><use href="#sky"/></svg></div><div class="da">10/30 17:04 <svg class="ic" width="12" height="12" style="fill:#1557e0"><use href="#com"/></svg>0</div><div class="tg g" style="width:128px"><svg class="ic" width="11" height="11"><use href="#tag"/></svg>東京都交通局（都…</div></div>
<div class="se" style="top:665px"></div>
<div class="it" style="top:669px"><svg class="lk" viewBox="0 0 24 24"><use href="#lnk" color="#333"/></svg><div class="ti"><a href="#">トタT32編成が国府津へ…</a></div><div class="th"><svg><use href="#org"/></svg></div><div class="da">10/30 16:01 <svg class="ic" width="12" height="12" style="fill:#1557e0"><use href="#com"/></svg>0</div><div class="tg"><svg class="ic" width="11" height="11"><use href="#tag"/></svg>E233系</div></div>
<div class="se" style="top:759px"></div>
<div class="it" style="top:763px"><svg class="lk" viewBox="0 0 24 24"><use href="#lnk" color="#333"/></svg><div class="ti"><a href="#">トタH59編成が12両で…</a></div><div class="th"><svg><use href="#led"/></svg></div><div class="da">10/30 15:41 <svg class="ic" width="12" height="12" style="fill:#1557e0"><use href="#com"/></svg>0</div><div class="tg"><svg class="ic" width="11" height="11"><use href="#tag"/></svg>E233系</div></div>
<div class="se" style="top:852px"></div>
<div class="it" style="top:856px"><svg class="lk" viewBox="0 0 24 24"><use href="#lnk" color="#333"/></svg><div class="ti"><a href="#">ミツA533編成にワンマ…</a></div><div class="th"><svg><use href="#met"/></svg></div><div class="da">10/30 12:34 <svg class="ic" width="12" height="12" style="fill:#1557e0"><use href="#com"/></svg>1</div><div class="tg"><svg class="ic" width="11" height="11"><use href="#tag"/></svg>E231系</div></div>
<div class="se" style="top:946px"></div>

<div class="hd" style="top:965px">新着ノート</div>

<div class="it" style="top:1036px"><svg class="lk" viewBox="0 0 24 24"><use href="#lnk" color="#333"/></svg><div class="ti"><a href="#">2024年度 終夜運転・冬…</a></div><div class="th"><svg><use href="#sky"/></svg></div><div class="da">10/20 16:44</div><div class="tg"><svg class="ic" width="11" height="11"><use href="#tag"/></svg>個人ノート</div></div>
<div class="se" style="top:1126px"></div>
<div class="it" style="top:1130px"><svg class="lk" viewBox="0 0 24 24"><use href="#lnk" color="#333"/></svg><div class="ti"><a href="#">埼京線ホームドア設置…</a></div><div class="th"><svg><use href="#met"/></svg></div><div class="da">09/02 14:02</div><div class="tg"><svg class="ic" width="11" height="11"><use href="#tag"/></svg>個人ノート</div></div>
<div class="se" style="top:1219px"></div>
<div class="it" style="top:1223px"><svg class="lk" viewBox="0 0 24 24"><use href="#lnk" color="#333"/></svg><div class="ti"><a href="#">高尾～立川間ホームド…</a></div><div class="th"><svg><use href="#met"/></svg></div><div class="da">09/02 13:58</div><div class="tg"><svg class="ic" width="11" height="11"><use href="#tag"/></svg>個人ノート</div></div>
<div class="se" style="top:1313px"></div>

<div class="hd" style="top:1332px">オンライン</div>

<div class="ava" style="left:994px;top:1404px"><svg><use href="#idn"/></svg></div>
<div class="ava" style="left:1046px;top:1404px"><svg><use href="#red"/></svg></div>
<div class="ava" style="left:1098px;top:1404px"><svg><use href="#sky"/></svg></div>
<div class="ava" style="left:994px;top:1468px"><svg><use href="#tob"/></svg></div>
<div class="ava" style="left:1046px;top:1468px"><svg><use href="#pan"/></svg></div>
<div class="ava" style="left:1098px;top:1468px"><svg><use href="#yel"/></svg></div>
<div class="ava" style="left:994px;top:1533px"><svg><use href="#idn"/></svg></div>
<div class="ava" style="left:1046px;top:1533px"><svg><use href="#tea"/></svg></div>
<div class="ava" style="left:1098px;top:1533px"><svg><use href="#y09"/></svg></div>
<div class="ava" style="left:994px;top:1598px"><svg><use href="#plt"/></svg></div>
<div class="ava" style="left:1046px;top:1598px"><svg><use href="#idn"/></svg></div>
<div class="ava" style="left:1098px;top:1598px"><svg><use href="#idn"/></svg></div>
<div class="ava" style="left:994px;top:1663px"><svg><use href="#led"/></svg></div>
<div class="ava" style="left:1046px;top:1663px"><svg><use href="#sei"/></svg></div>
<div class="ava" style="left:1098px;top:1663px"><svg><use href="#oda"/></svg></div>

<!-- buttons -->
<a href="#" class="b" style="left:88px;top:1777px;width:547px;height:45px;background:#c9caca;border-radius:4px;text-align:center;line-height:44px;font-size:18px">戻る</a>
<a href="#" class="b" style="left:648px;top:1777px;width:547px;height:45px;background:#c9caca;border-radius:4px;text-align:center;line-height:44px;font-size:18px">HOMEへ</a>

<div class="b" style="left:0;top:1852px;width:1284px;height:34px;background:#f9fafc"></div>
<div class="t" style="left:102px;top:1858px;color:#444;font-size:14px"><a href="#">HOME</a> &gt; <a href="#">機関車運用状況</a> &gt; <a href="#">新鶴見機関区 EF65形 運用状況</a> &gt; <a href="#">EF65 2083号機 運用履歴</a></div>

<!-- footer -->
<div class="b" style="left:0;top:1905px;width:1284px;height:388px;background:#919191"></div>
<div class="ft fh" style="left:98px;top:1936px">サイトについて</div>
<div class="ft" style="left:98px;top:1975px">鉄道車両・施設動向をまとめるコミュニティサイト</div>
<div class="ft" style="left:98px;top:1998px">（詳細）。</div>
<div class="ft fh" style="left:471px;top:1936px">JR車両動向</div>
<div class="ft" style="left:471px;top:1962px">山手線・中央総武緩行線の世代交代</div>
<div class="ft" style="left:471px;top:1986px">E257系転属の記録</div>
<div class="ft" style="left:471px;top:2010px">中央快速線グリーン車連結に伴う動き</div>
<div class="ft" style="left:471px;top:2034px">211系転属の記録</div>
<div class="ft" style="left:471px;top:2057px">京葉線の世代交代</div>
<div class="ft" style="left:471px;top:2081px">209系置き換えの記録</div>
<div class="ft" style="left:471px;top:2105px">首都圏の編成表・他</div>
<div class="ft fh" style="left:844px;top:1936px">参加型コンテンツ</div>
<div class="ft" style="left:844px;top:1962px">フォーラム</div>
<div class="ft" style="left:844px;top:1986px">メンバー</div>
<div class="ft" style="left:844px;top:2010px">グループ</div>
<div class="ft" style="left:844px;top:2034px">ノート</div>
<div class="ft fh" style="left:844px;top:2059px">その他</div>
<div class="ft" style="left:844px;top:2085px">電車走行キット</div>
<div class="ft" style="left:844px;top:2109px">アンテナ／リンク</div>
<div class="ft" style="left:844px;top:2133px">サイトについて</div>

<div class="fn" style="left:108px;top:2198px;width:109px"><svg class="ic" width="12" height="12"><use href="#com"/></svg> フォーラム</div>
<div class="fn" style="left:217px;top:2198px;width:170px"><svg class="ic" width="12" height="12"><use href="#rt"/></svg> 路線・系統別 編成表</div>
<div class="fn" style="left:387px;top:2198px;width:138px"><svg class="ic" width="11" height="11"><use href="#shuf"/></svg> 機関車運用状況</div>
<div class="fn" style="left:525px;top:2198px;width:155px"><svg class="ic" width="12" height="12"><use href="#bars"/></svg> JR 車両動向 (西)</div>
<div class="fn" style="left:680px;top:2198px;width:156px"><svg class="ic" width="12" height="12"><use href="#bars"/></svg> JR 車両動向 (東)</div>
<div class="fn" style="left:836px;top:2198px;width:170px"><svg class="ic" width="12" height="12"><use href="#pie"/></svg> 私鉄 車両動向 (東)</div>
<div class="fn" style="left:1006px;top:2198px;width:164px"><svg class="ic" width="12" height="12"><use href="#pie"/></svg> 私鉄 車両動向 (西)</div>
<div class="fn" style="left:119px;top:2221px;width:142px;height:24px"><svg class="ic" width="12" height="12"><use href="#ar"/></svg> 新幹線 車両動向</div>
<div class="fn" style="left:261px;top:2221px;width:95px;height:24px"><svg class="ic" width="12" height="12"><use href="#gift"/></svg> グループ</div>
<div class="fn" style="left:356px;top:2221px;width:137px;height:24px"><svg class="ic" width="12" height="12"><use href="#book"/></svg> 編成表更新情報</div>
<div class="fn" style="left:493px;top:2221px;width:82px;height:24px"><svg class="ic" width="12" height="12"><use href="#quo"/></svg> ノート</div>
<div class="fn" style="left:575px;top:2221px;width:95px;height:24px"><svg class="ic" width="12" height="12"><use href="#usr"/></svg> メンバー</div>
<div class="fn" style="left:670px;top:2221px;width:138px;height:24px"><svg class="ic" width="13" height="13"><use href="#usrs"/></svg> 全体の最新情報</div>
<div class="fn" style="left:808px;top:2221px;width:137px;height:24px"><svg class="ic" width="12" height="12"><use href="#wr"/></svg> 電車走行キット</div>
<div class="fn" style="left:945px;top:2221px;width:82px;height:24px"><svg class="ic" width="12" height="12"><use href="#lnk"/></svg> リンク</div>
<div class="fn" style="left:1027px;top:2221px;width:138px;height:24px;border-right:1px solid #bbb"><svg class="ic" width="12" height="12"><use href="#info"/></svg> サイトについて</div>
<div class="ft" style="left:0;top:2254px;width:1284px;text-align:center;">© 2004-2024 4号車の5号車寄り.</div>
</body>
</html>
